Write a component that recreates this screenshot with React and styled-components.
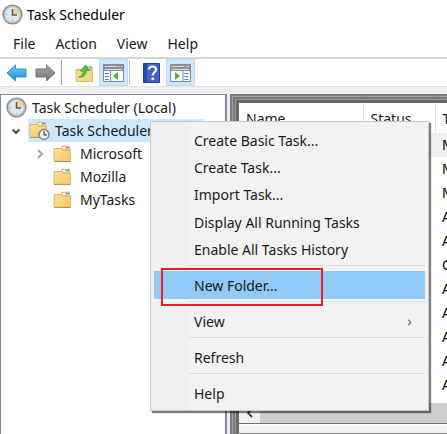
import React from "react";
import styled, { createGlobalStyle, css } from "styled-components";

const GlobalStyle = createGlobalStyle`
  * { box-sizing: border-box; }
  html, body { margin: 0; overflow: hidden; background: #f0f0f0; }
  body, button, table {
    font-family: "Noto Sans", "Open Sans", sans-serif;
    font-size: 14px;
    line-height: 20px;
    color: #1a1a1a;
  }
  button { border: 0; padding: 0; background: none; text-align: left; }
`;

const Window = styled.div`
  position: relative;
  display: flex;
  flex-direction: column;
  height: 100vh;
  overflow: hidden;
`;

const TitleBar = styled.header`
  display: flex;
  align-items: center;
  gap: 4px;
  height: 29px;
  padding: 0 2px;
  background: #fff;
`;

const Title = styled.h1`
  margin: 0;
  font-size: 14px;
  font-weight: 400;
  color: #000;
`;

const MenuBar = styled.nav`
  display: flex;
  align-items: center;
  gap: 20px;
  height: 30px;
  padding: 2px 13px 0;
  background: #fff;
  border-bottom: 2px solid #d3d4d8;
`;

const MenuButton = styled.button`
  flex: none;
`;

const Toolbar = styled.div`
  display: flex;
  align-items: center;
  height: 28px;
  padding-left: 2px;
  background: #fff;
  border-bottom: 1px solid #e3e3e3;
`;

const ToolButton = styled.button`
  display: grid;
  place-items: center;
  width: 29px;
  height: 27px;
  ${(p) => p.$active && css`
    background: #cce8ff;
    border: 1px solid #b9defb;
  `}
`;

const ToolDivider = styled.span`
  width: 1px;
  height: 25px;
  margin: 0 ${(p) => p.$after || 0}px 0 1px;
  background: ${(p) => p.$tone};
`;

const Workspace = styled.main`
  display: flex;
  flex: 1;
  gap: 3px;
  min-height: 0;
  padding-top: 7px;
`;

const TreePane = styled.section`
  flex: 0 0 227px;
  min-width: 0;
  background: #fff;
  border: 1px solid #82879a;
  border-right-width: 2px;
  border-bottom: 0;
  overflow: hidden;
`;

const Tree = styled.ul`
  margin: 0;
  padding: 1px 0 0;
  list-style: none;
`;

const TreeRow = styled.li`
  display: flex;
  align-items: center;
  height: 23px;
  padding-left: ${(p) => [4, 10, 34][p.$level]}px;
`;

const Expander = styled.span`
  display: flex;
  flex: none;
  width: 17px;
`;

const TreeLabel = styled.button`
  display: flex;
  align-items: center;
  gap: ${(p) => p.$gap || 5}px;
  height: 23px;
  padding: 0 1px;
  white-space: nowrap;
  background: ${(p) => (p.$selected ? "#cce8ff" : "transparent")};
`;

const ListFrame = styled.section`
  display: flex;
  flex: 1;
  min-width: 0;
  background: #7c7c7c;
  padding: 2px 0 1px 2px;
  overflow: hidden;
`;

const FrameBands = styled.div`
  display: flex;
  flex: 1;
  flex-direction: column;
  min-width: 0;
  background: #696969;
  border: solid #a0a0a0;
  border-width: 1px 0 0 1px;
  box-shadow: inset 2px 2px #787878, inset 3px 3px #9a9a9a;
  padding: 6px 0 0 6px;
`;

const ListBody = styled.div`
  flex: 1;
  min-height: 0;
  background: #fff;
  overflow: hidden;
`;

const TaskTable = styled.table`
  width: 100%;
  min-width: 300px;
  table-layout: fixed;
  border-collapse: collapse;
`;

const HeadCell = styled.th`
  width: ${(p) => (p.$width ? `${p.$width}px` : "auto")};
  height: 30px;
  padding: 2px 7px 0;
  font-weight: 400;
  text-align: left;
  border-right: 1px solid #e5e5e5;
`;

const TaskRow = styled.tr`
  background: ${(p) => (p.$current ? "#f0f0f0" : "#fff")};
`;

const Cell = styled.td`
  height: 24px;
  padding: 0 7px;
  color: #000;
`;

const ScrollBar = styled.div`
  display: flex;
  height: 20px;
  background: #f0f0f0;
`;

const ScrollButton = styled.button`
  display: grid;
  place-items: center;
  width: 21px;
`;

const ScrollThumb = styled.div`
  flex: 1;
  background: #cdcdcd;
`;

const FrameFooter = styled.div`
  height: 10px;
  border-top: 1px solid #6c6c6c;
  background: #f0f0f0;
  box-shadow: inset 0 2px #fff;
`;

const ContextMenu = styled.div`
  position: absolute;
  left: 150px;
  top: 121px;
  width: 279px;
  padding: 4px 3px 3px;
  background: linear-gradient(90deg, #f0f0f0 38px, #f2f2f2 38px);
  border: 1px solid #c8c8c8;
  box-shadow: 2px 2px 1px rgba(0, 0, 0, 0.5);
`;

const TaskCommands = styled.div`
  display: grid;
  grid-auto-rows: 1fr;
  height: 137px;
`;

const MenuItem = styled.button`
  position: relative;
  display: flex;
  align-items: center;
  justify-content: space-between;
  width: 100%;
  min-height: 27px;
  height: ${(p) => (p.$grouped ? "auto" : "28px")};
  padding: 2px 12px 0 40px;
  white-space: nowrap;
  background: ${(p) => (p.$highlighted ? "#91c9f7" : "transparent")};
`;

const MenuSeparator = styled.hr`
  height: 1px;
  margin: 2px 0 5px 35px;
  border: 0;
  background: #dcdcdc;
`;

const Callout = styled.span`
  position: absolute;
  left: 7px;
  top: -3px;
  width: 162px;
  height: 38px;
  border: 2px solid #ed1c24;
  pointer-events: none;
`;

function ClockIcon({ size = 21 }) {
  return (
    <svg width={size} height={size} viewBox="0 0 21 21" aria-hidden="true">
      <circle cx="10.5" cy="10.5" r="9.3" fill="#dce8f2" stroke="#8b8c8f" strokeWidth="1.6" />
      <circle cx="10.5" cy="10.5" r="8" fill="none" stroke="#bdbec0" strokeWidth="1.4" />
      <path d="M10.5 10.5V3.2a7.3 7.3 0 0 1 7.3 7.3z" fill="#f5d493" />
      <path d="M10.5 5v6h4.500" fill="none" stroke="#4c5a69" strokeWidth="1.500" />
      <path d="M4 10.5h1M10.5 16v1" stroke="#8594a2" />
    </svg>
  );
}

function FolderShape() {
  return (
    <>
      <path d="M1 3h7.500V1.500q0-.8.8-.8h7q.8 0 .8.8V16H1z" fill="#e0b257" />
      <path d="M9.500 1.700h6.800v2.600H9.500z" fill="#fdf3cf" />
      <path d="M12.500 1.900h3.600v1.400h-3.600z" fill="#4a9fd6" />
      <path d="M1 3.500h7.500l1.500 1.700h7.500v11H1z" fill="url(#folderFace)" stroke="#dcb058" strokeWidth=".8" />
      <path d="M1 16.500h16.500" stroke="#c2933d" />
    </>
  );
}

function FolderIcon() {
  return (
    <svg width="19" height="18" viewBox="0 0 19 18" aria-hidden="true">
      <FolderShape />
    </svg>
  );
}

function FolderGradient() {
  return (
    <defs>
      <linearGradient id="folderFace" x2="1" y2="1">
        <stop stopColor="#fde29a" />
        <stop offset="1" stopColor="#f0c66b" />
      </linearGradient>
    </defs>
  );
}

function LibraryIcon() {
  return (
    <svg width="21" height="20" viewBox="0 0 21 20" aria-hidden="true">
      <FolderGradient />
      <FolderShape />
      <circle cx="15" cy="13.500" r="5" fill="#e6f0f7" stroke="#7e8b95" strokeWidth="1.500" />
      <path d="M15 10v3.800h2.800" fill="none" stroke="#44525e" strokeWidth="1.200" />
    </svg>
  );
}

function ArrowIcon({ forward }) {
  const id = forward ? "forwardFill" : "backFill";
  return (
    <svg width="21" height="18" viewBox="0 0 21 18" aria-hidden="true">
      <defs>
        <linearGradient id={id} x2="0" y2="1">
          <stop stopColor={forward ? "#ababab" : "#7bd0f8"} />
          <stop offset="1" stopColor={forward ? "#707070" : "#128ad8"} />
        </linearGradient>
      </defs>
      <path
        d={forward ? "M20 9l-8.500-8v4H1v8h10.500v4z" : "M1 9l8.500-8v4H20v8H9.500v4z"}
        fill={`url(#${id})`}
        stroke={forward ? "#777" : "#3592c6"}
        strokeLinejoin="round"
      />
    </svg>
  );
}

function UpFolderIcon() {
  return (
    <svg width="19" height="20" viewBox="0 0 19 20" aria-hidden="true">
      <path d="M1 6h8l2-3h6.500v15.500H1z" fill="#e2b65c" />
      <path d="M12 4h5v2h-5z" fill="#fff8df" />
      <path d="M14 4.300h3v1.200h-3z" fill="#4a9fd6" />
      <path d="M1 7h16.500v11.500H1z" fill="#f7d887" stroke="#d5aa50" strokeWidth=".7" />
      <path d="M3.500 14c3-.5 4.500-2.500 4.700-6H5.200L10.500 2l4 5.500h-3c-.2 4-3 7.500-8 6.500z" fill="#4fc43c" stroke="#2f9e2a" strokeWidth=".7" />
    </svg>
  );
}

function PaneIcon({ mirrored }) {
  const list = mirrored ? 14.5 : 2;
  return (
    <svg width="21" height="18" viewBox="0 0 21 18" aria-hidden="true">
      <path d="M.5.500h20v17H.5z" fill="#f7f8f8" stroke="#858b91" />
      <path d="M1 1h19v6H1z" fill="#8c9298" />
      <path d="M2 2.500h12M2 5.500h17" stroke="#d7dadd" />
      <path d="M15.500 2.500h1M18 2.500h1" stroke="#fff" />
      <path d={mirrored ? "M13 7v10" : "M7.500 7v10"} stroke="#8c9298" />
      <path d={`M${list} 9.500h4M${list} 12.500h4M${list} 15.500h4`} stroke="#4a87bf" />
      <path d={mirrored ? "M5 8v8l5-4z" : "M15 8v8l-5-4z"} fill="#45b82f" />
    </svg>
  );
}

function HelpIcon() {
  return (
    <svg width="17" height="20" viewBox="0 0 17 20" aria-hidden="true">
      <path d="M.5.500h16v19H.5z" fill="#4063c6" stroke="#203f9b" />
      <path d="M1 1h3v18H1z" fill="#2849a8" />
      <path d="M6 6.500c0-4 7-4 7 0 0 3-3.300 3-3.300 6" fill="none" stroke="#fff" strokeWidth="2.200" />
      <circle cx="9.700" cy="15.800" r="1.400" fill="#fff" />
    </svg>
  );
}

function Chevron({ direction, color = "#444", size = 10 }) {
  const paths = { down: "M1.500 3.500L5 7l3.500-3.500", right: "M3 1l4 4-4 4", left: "M7 1L3 5l4 4" };
  return (
    <svg width={size} height={size} viewBox="0 0 10 10" aria-hidden="true">
      <path d={paths[direction]} fill="none" stroke={color} strokeWidth="1.800" />
    </svg>
  );
}

const taskCommands = [
  "Create Basic Task...",
  "Create Task...",
  "Import Task...",
  "Display All Running Tasks",
  "Enable All Tasks History",
];

const triggers = ["M", "M", "M", "A", "A", "O", "A", "A", "A", "A", "A"];

export default function App() {
  return (
    <Window>
      <GlobalStyle />
      <TitleBar>
        <ClockIcon />
        <Title>Task Scheduler</Title>
      </TitleBar>
      <MenuBar>
        {["File", "Action", "View", "Help"].map((name) => (
          <MenuButton key={name}>{name}</MenuButton>
        ))}
      </MenuBar>
      <Toolbar>
        <ToolButton aria-label="Back"><ArrowIcon /></ToolButton>
        <ToolButton aria-label="Forward"><ArrowIcon forward /></ToolButton>
        <ToolDivider $tone="#a9a9a9" $after={8} />
        <ToolButton aria-label="Up one level"><UpFolderIcon /></ToolButton>
        <ToolButton aria-label="Show console tree" $active><PaneIcon /></ToolButton>
        <ToolDivider $tone="#c4c4c4" $after={7} />
        <ToolButton aria-label="Help"><HelpIcon /></ToolButton>
        <ToolButton aria-label="Show action pane" $active><PaneIcon mirrored /></ToolButton>
      </Toolbar>
      <Workspace>
        <TreePane>
          <Tree>
            <TreeRow $level={0}>
              <TreeLabel><ClockIcon />Task Scheduler (Local)</TreeLabel>
            </TreeRow>
            <TreeRow $level={1}>
              <Expander><Chevron direction="down" /></Expander>
              <TreeLabel $selected><LibraryIcon />Task Scheduler Library</TreeLabel>
            </TreeRow>
            {["Microsoft", "Mozilla", "MyTasks"].map((name) => (
              <TreeRow key={name} $level={2}>
                <Expander>{name === "Microsoft" && <Chevron direction="right" color="#a0a0a0" />}</Expander>
                <TreeLabel $gap={8}><FolderIcon />{name}</TreeLabel>
              </TreeRow>
            ))}
          </Tree>
        </TreePane>
        <ListFrame>
          <FrameBands>
            <ListBody>
              <TaskTable>
                <thead>
                  <tr>
                    <HeadCell $width={124}>Name</HeadCell>
                    <HeadCell $width={72}>Status</HeadCell>
                    <HeadCell>Triggers</HeadCell>
                  </tr>
                </thead>
                <tbody>
                  {triggers.map((trigger, i) => (
                    <TaskRow key={i} $current={i === 0}>
                      <Cell />
                      <Cell />
                      <Cell>{trigger}</Cell>
                    </TaskRow>
                  ))}
                </tbody>
              </TaskTable>
            </ListBody>
            <ScrollBar>
              <ScrollButton aria-label="Scroll left"><Chevron direction="left" /></ScrollButton>
              <ScrollThumb />
            </ScrollBar>
            <FrameFooter />
          </FrameBands>
        </ListFrame>
      </Workspace>
      <ContextMenu role="menu">
        <TaskCommands>
          {taskCommands.map((name) => (
            <MenuItem key={name} role="menuitem" $grouped>{name}</MenuItem>
          ))}
        </TaskCommands>
        <MenuSeparator />
        <MenuItem role="menuitem" $highlighted>New Folder...<Callout /></MenuItem>
        <MenuSeparator />
        <MenuItem role="menuitem">View<Chevron direction="right" color="#777" size={7} /></MenuItem>
        <MenuSeparator />
        <MenuItem role="menuitem">Refresh</MenuItem>
        <MenuSeparator />
        <MenuItem role="menuitem">Help</MenuItem>
      </ContextMenu>
    </Window>
  );
}
